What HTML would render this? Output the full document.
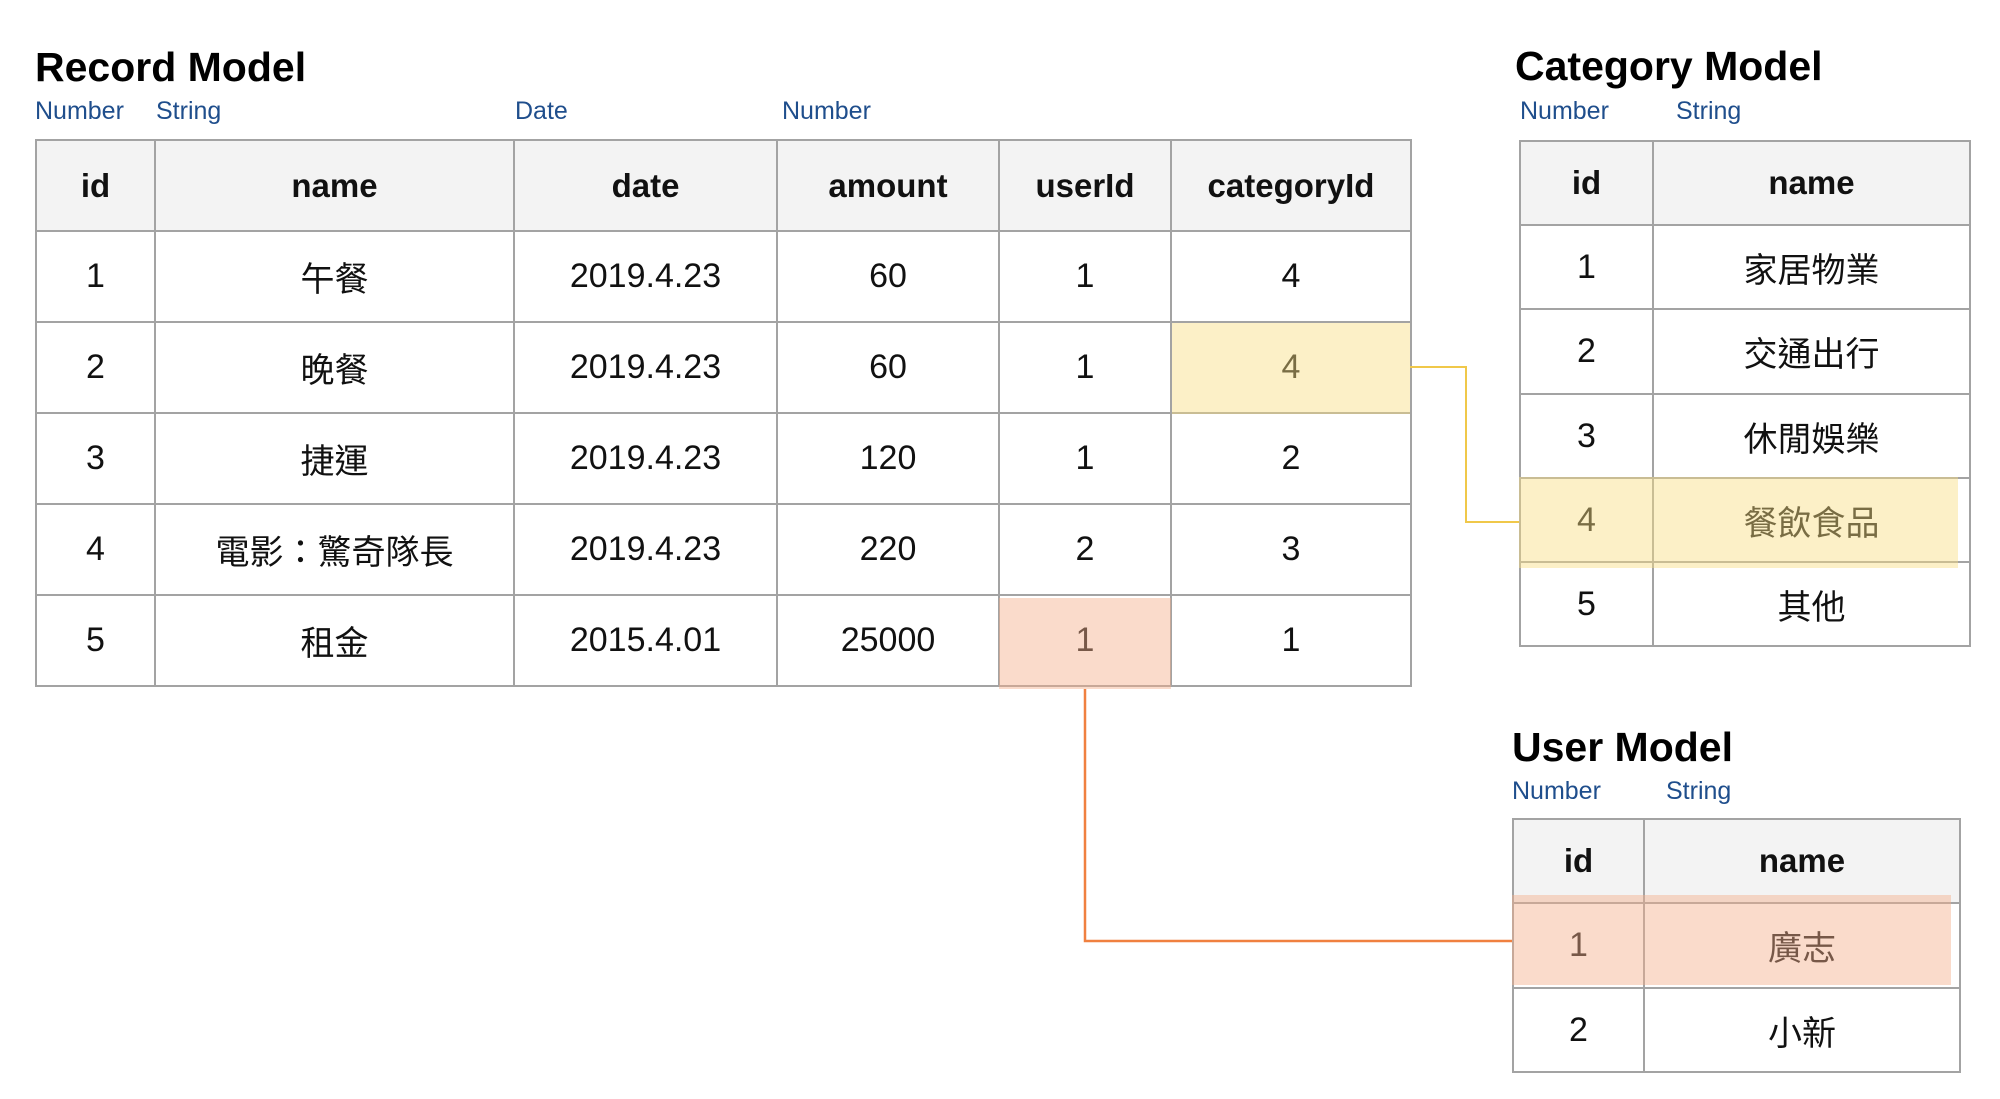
<!DOCTYPE html>
<html><head><meta charset="utf-8"><style>
body{margin:0;width:2000px;height:1099px;background:#fff;position:relative;overflow:hidden;font-family:"Liberation Sans","Noto Sans CJK TC",sans-serif;color:#111}
.t{position:absolute;font-weight:bold;font-size:41px;color:#000}
.l{position:absolute;font-size:25px;color:#1f4e8c}
table{position:absolute;border-collapse:collapse;table-layout:fixed}
td,th{border:2px solid #a3a3a3;text-align:center;font-size:34px;padding:0}
th{background:#f3f3f3;font-weight:bold;font-size:33px}
.ov{position:absolute}
.ln{position:absolute}
</style></head><body>
<div class="t" style="left:35px;top:44px">Record Model</div>
<div class="l" style="left:35px;top:97px">Number</div>
<div class="l" style="left:156px;top:97px">String</div>
<div class="l" style="left:515px;top:97px">Date</div>
<div class="l" style="left:782px;top:97px">Number</div>
<table style="left:35px;top:139px;width:1375px">
<colgroup><col style="width:119px"><col style="width:359px"><col style="width:263px"><col style="width:222px"><col style="width:172px"><col style="width:240px"></colgroup>
<tr style="height:91px"><th>id</th><th>name</th><th>date</th><th>amount</th><th>userId</th><th>categoryId</th></tr>
<tr style="height:91px"><td>1</td><td>午餐</td><td>2019.4.23</td><td>60</td><td>1</td><td>4</td></tr>
<tr style="height:91px"><td>2</td><td>晚餐</td><td>2019.4.23</td><td>60</td><td>1</td><td>4</td></tr>
<tr style="height:91px"><td>3</td><td>捷運</td><td>2019.4.23</td><td>120</td><td>1</td><td>2</td></tr>
<tr style="height:91px"><td>4</td><td>電影：驚奇隊長</td><td>2019.4.23</td><td>220</td><td>2</td><td>3</td></tr>
<tr style="height:91px"><td>5</td><td>租金</td><td>2015.4.01</td><td>25000</td><td>1</td><td>1</td></tr>
</table>
<div class="ov" style="left:1172px;top:323px;width:238px;height:91px;background:rgba(248,222,130,0.45)"></div>
<div class="ov" style="left:999px;top:598px;width:172px;height:91px;background:rgba(243,175,140,0.45)"></div>

<div class="t" style="left:1515px;top:43px">Category Model</div>
<div class="l" style="left:1520px;top:97px">Number</div>
<div class="l" style="left:1676px;top:97px">String</div>
<table style="left:1519px;top:140px;width:450px">
<colgroup><col style="width:133px"><col style="width:317px"></colgroup>
<tr style="height:84px"><th>id</th><th>name</th></tr>
<tr style="height:84px"><td>1</td><td>家居物業</td></tr>
<tr style="height:85px"><td>2</td><td>交通出行</td></tr>
<tr style="height:84px"><td>3</td><td>休閒娛樂</td></tr>
<tr style="height:84px"><td>4</td><td>餐飲食品</td></tr>
<tr style="height:84px"><td>5</td><td>其他</td></tr>
</table>
<div class="ov" style="left:1519px;top:477px;width:439px;height:91px;background:rgba(248,222,130,0.45)"></div>

<div class="t" style="left:1512px;top:724px">User Model</div>
<div class="l" style="left:1512px;top:777px">Number</div>
<div class="l" style="left:1666px;top:777px">String</div>
<table style="left:1512px;top:818px;width:447px">
<colgroup><col style="width:131px"><col style="width:316px"></colgroup>
<tr style="height:84px"><th>id</th><th>name</th></tr>
<tr style="height:85px"><td>1</td><td>廣志</td></tr>
<tr style="height:84px"><td>2</td><td>小新</td></tr>
</table>
<div class="ov" style="left:1512px;top:895px;width:439px;height:90px;background:rgba(243,175,140,0.45)"></div>

<svg class="ln" style="left:0;top:0" width="2000" height="1099">
<polyline points="1410,367 1466,367 1466,522 1519,522" fill="none" stroke="#f0c84a" stroke-width="2"/>
<polyline points="1085,689 1085,941 1512,941" fill="none" stroke="#f08040" stroke-width="2.5"/>
</svg>
</body></html>
